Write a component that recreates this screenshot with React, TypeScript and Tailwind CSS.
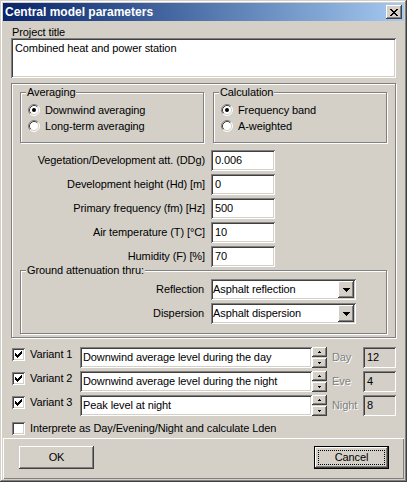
import React from "react";

const F = "font-['Liberation_Sans',Arial,sans-serif]";
const sunken =
  "shadow-[inset_1px_1px_0_#808080,inset_-1px_-1px_0_#ffffff,inset_2px_2px_0_#404040,inset_-2px_-2px_0_#d4d0c8]";
const raised =
  "shadow-[inset_-1px_-1px_0_#404040,inset_1px_1px_0_#ffffff,inset_-2px_-2px_0_#808080,inset_2px_2px_0_#d4d0c8]";
const etched = "border border-[#808080] shadow-[inset_1px_1px_0_#ffffff,1px_1px_0_#ffffff]";

function Radio({ checked }: { checked?: boolean }) {
  return (
    <svg width="12" height="12" viewBox="0 0 12 12" className="shrink-0">
      <circle cx="6" cy="6" r="5" fill="#ffffff" />
      <path d="M2.11 9.89 A5.5 5.5 0 0 1 9.89 2.11" stroke="#808080" fill="none" />
      <path d="M9.89 2.11 A5.5 5.5 0 0 1 2.11 9.89" stroke="#ffffff" fill="none" />
      <path d="M2.82 9.18 A4.5 4.5 0 0 1 9.18 2.82" stroke="#404040" fill="none" />
      <path d="M9.18 2.82 A4.5 4.5 0 0 1 2.82 9.18" stroke="#d4d0c8" fill="none" />
      {checked && <circle cx="6" cy="6" r="2" fill="#000000" />}
    </svg>
  );
}

function Check({ checked }: { checked?: boolean }) {
  const cols = [
    [3, 5],
    [4, 6],
    [5, 7],
    [6, 6],
    [7, 5],
    [8, 4],
    [9, 3],
  ];
  return (
    <div className={`w-[13px] h-[13px] bg-white shrink-0 ${sunken}`}>
      {checked && (
        <svg width="13" height="13" viewBox="0 0 13 13">
          {cols.map(([x, y]) => (
            <rect key={x} x={x} y={y} width="1" height="3" fill="#000" />
          ))}
        </svg>
      )}
    </div>
  );
}

function GroupBox({
  label,
  className,
  children,
}: {
  label: string;
  className?: string;
  children: React.ReactNode;
}) {
  return (
    <div className={`relative ${etched} ${className ?? ""}`}>
      <span className="absolute left-[5px] top-[-7px] px-[1px] bg-[#d4d0c8] leading-[13px]">
        {label}
      </span>
      {children}
    </div>
  );
}

function Field({ label, value }: { label: string; value: string }) {
  return (
    <div className="flex items-center h-[21px] mb-[3px]">
      <div className="w-[185px] text-right leading-[13px]">{label}</div>
      <div className={`ml-[6px] w-[64px] h-[21px] bg-white pl-[4px] flex items-center leading-[13px] ${sunken}`}>
        {value}
      </div>
    </div>
  );
}

function DownArrow() {
  return (
    <svg width="7" height="4" viewBox="0 0 7 4">
      <rect x="0" y="0" width="7" height="1" fill="#000" />
      <rect x="1" y="1" width="5" height="1" fill="#000" />
      <rect x="2" y="2" width="3" height="1" fill="#000" />
      <rect x="3" y="3" width="1" height="1" fill="#000" />
    </svg>
  );
}

function Select({ label, value, className }: { label: string; value: string; className?: string }) {
  return (
    <div className={`flex items-center h-[21px] ${className ?? ""}`}>
      <div className="w-[183px] text-right leading-[13px]">{label}</div>
      <div className={`ml-[7px] w-[145px] h-[21px] bg-white flex items-center ${sunken}`}>
        <span className="flex-1 pl-[2px] leading-[13px]">{value}</span>
        <div className={`w-[16px] h-[17px] mr-[2px] bg-[#d4d0c8] flex items-center justify-center ${raised}`}>
          <DownArrow />
        </div>
      </div>
    </div>
  );
}

function Spin() {
  const half = `h-[10px] w-full bg-[#d4d0c8] flex items-center justify-center ${raised}`;
  return (
    <div className="w-[15px] h-[21px] flex flex-col justify-between">
      <div className={half}>
        <svg width="3" height="2" viewBox="0 0 3 2">
          <rect x="1" y="0" width="1" height="1" fill="#000" />
          <rect x="0" y="1" width="3" height="1" fill="#000" />
        </svg>
      </div>
      <div className={half}>
        <svg width="3" height="2" viewBox="0 0 3 2">
          <rect x="0" y="0" width="3" height="1" fill="#000" />
          <rect x="1" y="1" width="1" height="1" fill="#000" />
        </svg>
      </div>
    </div>
  );
}

function VariantRow({
  n,
  text,
  tag,
  val,
}: {
  n: number;
  text: string;
  tag: string;
  val: string;
}) {
  return (
    <div className="flex items-start h-[21px]">
      <div className="w-[69px] flex items-start pl-[1px] pt-[1px] gap-[5px]">
        <Check checked />
        <span className="leading-[13px]">Variant {n}</span>
      </div>
      <div className={`w-[232px] h-[21px] bg-white pl-[3px] flex items-center leading-[13px] ${sunken}`}>
        {text}
      </div>
      <Spin />
      <span className="ml-[5px] mt-[4px] leading-[13px] text-[#808080] [text-shadow:1px_1px_0_#ffffff]">
        {tag}
      </span>
      <div className={`ml-auto w-[33px] h-[21px] bg-[#d4d0c8] pl-[4px] flex items-center leading-[13px] ${sunken}`}>
        {val}
      </div>
    </div>
  );
}

function CloseX() {
  const rows = ["11000011", "01100110", "00111100", "00011000", "00111100", "01100110", "11000011"];
  return (
    <svg width="8" height="7" viewBox="0 0 8 7">
      {rows.flatMap((r, y) =>
        r.split("").map((c, x) =>
          c === "1" ? <rect key={`${x}-${y}`} x={x} y={y} width="1" height="1" fill="#000" /> : null
        )
      )}
    </svg>
  );
}

export default function App() {
  return (
    <div
      className={`w-[407px] h-[482px] bg-[#d4d0c8] p-[3px] flex flex-col text-[11px] text-black tracking-[-0.1px] ${F} shadow-[inset_-1px_-1px_0_#404040,inset_1px_1px_0_#d4d0c8,inset_-2px_-2px_0_#808080,inset_2px_2px_0_#ffffff]`}
    >
      {/* Title bar */}
      <div className="h-[18px] flex items-center bg-gradient-to-r from-[#0a246a] to-[#a6caf0] pl-[2px] pr-[2px]">
        <span className="flex-1 text-white font-bold text-[12px] leading-[14px] tracking-normal">
          Central model parameters
        </span>
        <div className={`w-[16px] h-[14px] bg-[#d4d0c8] flex items-center justify-center ${raised}`}>
          <CloseX />
        </div>
      </div>

      {/* Body */}
      <div className="flex-1 flex flex-col px-[8px]">
        <div className="mt-[6px] h-[11px] leading-[11px] pl-[1px]">Project title</div>
        <div className={`h-[40px] bg-white pl-[4px] pt-[3px] leading-[14px] ${sunken}`}>
          Combined heat and power station
        </div>

        <div className={`mt-[5px] h-[255px] pt-[8px] px-[8px] ${etched}`}>
          <div className="flex gap-[9px]">
            <GroupBox label="Averaging" className="w-[184px] h-[51px] pt-[9px] pl-[7px]">
              <div className="h-[16px] flex items-center gap-[5px]">
                <Radio checked />
                <span className="leading-[13px]">Downwind averaging</span>
              </div>
              <div className="h-[16px] flex items-center gap-[5px]">
                <Radio />
                <span className="leading-[13px]">Long-term averaging</span>
              </div>
            </GroupBox>
            <GroupBox label="Calculation" className="flex-1 h-[51px] pt-[9px] pl-[7px]">
              <div className="h-[16px] flex items-center gap-[5px]">
                <Radio checked />
                <span className="leading-[13px]">Frequency band</span>
              </div>
              <div className="h-[16px] flex items-center gap-[5px]">
                <Radio />
                <span className="leading-[13px]">A-weighted</span>
              </div>
            </GroupBox>
          </div>

          <div className="mt-[7px]">
            <Field label="Vegetation/Development att. (DDg)" value="0.006" />
            <Field label="Development height (Hd) [m]" value="0" />
            <Field label="Primary frequency (fm) [Hz]" value="500" />
            <Field label="Air temperature (T) [°C]" value="10" />
            <Field label="Humidity (F) [%]" value="70" />
          </div>

          <GroupBox label="Ground attenuation thru:" className="mt-[1px] h-[64px] pt-[8px]">
            <Select label="Reflection" value="Asphalt reflection" />
            <Select label="Dispersion" value="Asphalt dispersion" className="mt-[3px]" />
          </GroupBox>
        </div>

        <div className="mt-[9px] flex flex-col gap-[3px]">
          <VariantRow n={1} text="Downwind average level during the day" tag="Day" val="12" />
          <VariantRow n={2} text="Downwind average level during the night" tag="Eve" val="4" />
          <VariantRow n={3} text="Peak level at night" tag="Night" val="8" />
        </div>

        <div className="mt-[5px] h-[15px] flex items-center gap-[5px] pl-[1px]">
          <Check />
          <span className="leading-[13px]">Interprete as Day/Evening/Night and calculate Lden</span>
        </div>
      </div>

      {/* Bottom button panel */}
      <div className="h-[41px] flex items-start justify-between pl-[16px] pr-[15px] pt-[8px] shadow-[inset_1px_1px_0_#ffffff,inset_-1px_-1px_0_#808080]">
        <div className={`w-[75px] h-[23px] flex items-center justify-center leading-[13px] ${raised}`}>
          OK
        </div>
        <div className="w-[75px] h-[23px] border border-black">
          <div className={`w-full h-full flex items-center justify-center p-[3px] ${raised}`}>
            <div className="w-full h-full border border-dotted border-black flex items-center justify-center leading-[13px]">
              Cancel
            </div>
          </div>
        </div>
      </div>
    </div>
  );
}
